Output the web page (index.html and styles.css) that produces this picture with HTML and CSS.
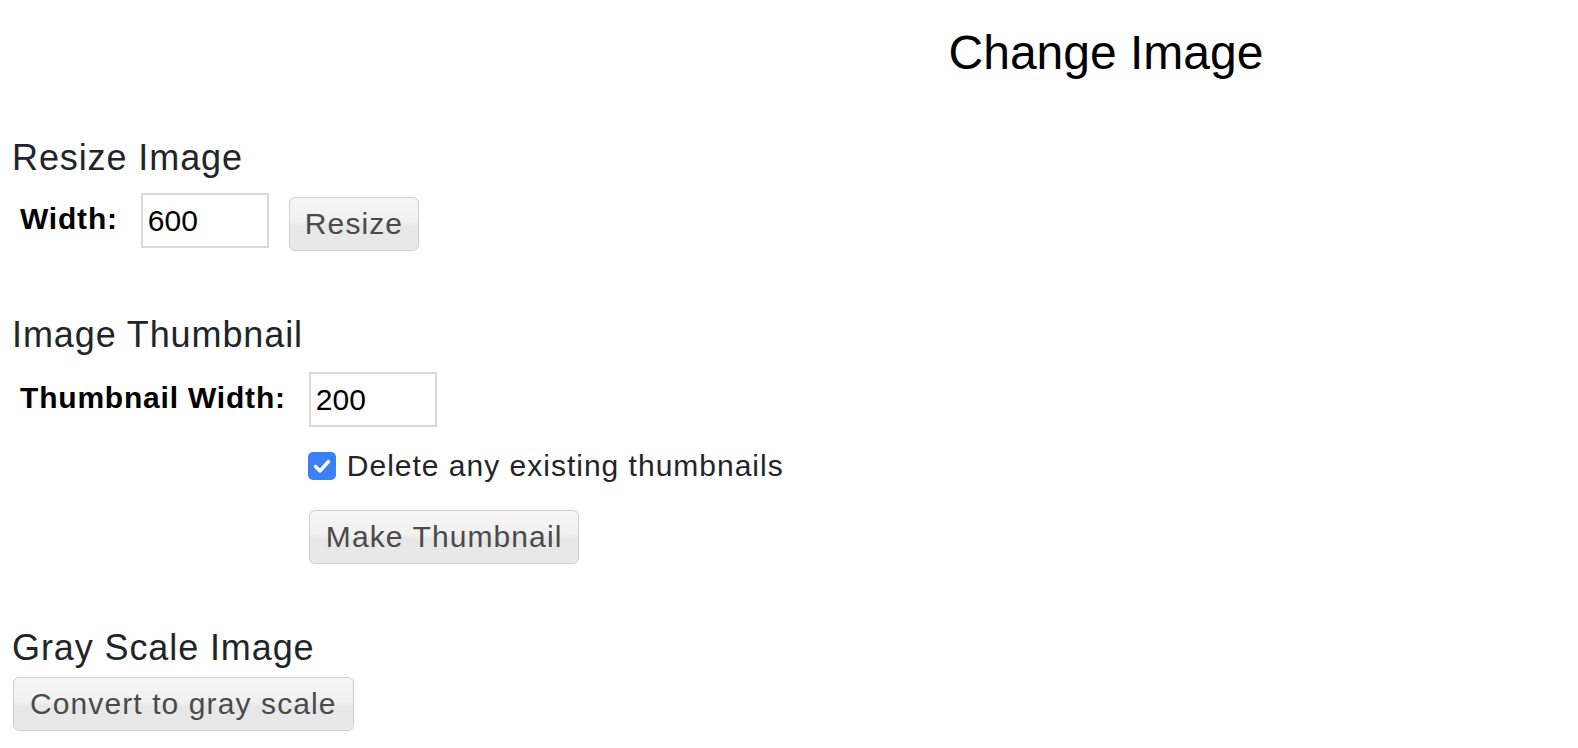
FILE: index.html
```html
<!DOCTYPE html>
<html lang="en">
<head>
<meta charset="utf-8">
<title>Change Image</title>
<link rel="stylesheet" href="styles.css">
</head>
<body>
<header class="top">
  <div class="top-spacer"></div>
  <h2 class="title">Change Image</h2>
</header>
<main class="page">
  <section class="tool tool-first">
    <h3 class="tool-title">Resize Image</h3>
    <form class="resize-row">
      <label class="field-label" for="resize-width">Width:</label>
      <input class="text-input" id="resize-width" type="text" value="600">
      <button class="btn btn-resize" type="button">Resize</button>
    </form>
  </section>
  <section class="tool">
    <h3 class="tool-title">Image Thumbnail</h3>
    <form class="thumb-grid">
      <label class="field-label" for="thumb-width">Thumbnail Width:</label>
      <input class="text-input" id="thumb-width" type="text" value="200">
      <label class="check-row">
        <span class="check-box"><svg width="28" height="28" viewBox="0 0 28 28"><path d="M7.5 14.5l4.5 4.5 8.5-9.5" fill="none" stroke="#fff" stroke-width="3.4" stroke-linecap="round" stroke-linejoin="round"/></svg></span>
        <span class="check-text">Delete any existing thumbnails</span>
      </label>
      <button class="btn btn-thumb" type="button">Make Thumbnail</button>
    </form>
  </section>
  <section class="tool tool-last">
    <h3 class="tool-title">Gray Scale Image</h3>
    <button class="btn btn-gray" type="button">Convert to gray scale</button>
  </section>
</main>
</body>
</html>
```
FILE: styles.css
```css
html, body {
  margin: 0;
  padding: 0;
  background: #fff;
}

body {
  font-family: "Liberation Sans", Arial, Helvetica, sans-serif;
  color: #212529;
}

.top {
  display: grid;
  grid-template-columns: 634px 1fr;
}

.title {
  margin: 0;
  padding-top: 25px;
  font-size: 48px;
  line-height: 56px;
  font-weight: 400;
  color: #000;
  text-align: center;
}

.page {
  padding-left: 12px;
}

.tool {
  margin-top: 64px;
}

.tool-first {
  margin-top: 57px;
}

.tool-title {
  margin: 0;
  font-size: 36px;
  line-height: 40px;
  font-weight: 400;
  letter-spacing: 0.9px;
  color: #212529;
}

.field-label {
  font-size: 30px;
  line-height: 34px;
  font-weight: 700;
  color: #000;
  letter-spacing: 0.8px;
  margin-left: 8px;
  margin-top: 9px;
}

.text-input {
  box-sizing: border-box;
  width: 128px;
  height: 55px;
  border: 2px solid #dadada;
  border-radius: 0;
  padding: 0 5px;
  font-family: "Liberation Sans", Arial, Helvetica, sans-serif;
  font-size: 30px;
  color: #000;
  background: #fff;
  outline: none;
}

.resize-row {
  margin: 15px 0 0;
  display: flex;
  align-items: flex-start;
  gap: 23px;
}

.btn {
  box-sizing: border-box;
  height: 54px;
  padding: 0 16px;
  border: 1.5px solid #cfcfcf;
  border-radius: 6px;
  background: linear-gradient(#f6f6f6, #f1f1f1 45%, #e7e7e7 55%, #e9e9e9);
  font-family: "Liberation Sans", Arial, Helvetica, sans-serif;
  font-size: 30px;
  letter-spacing: 1.1px;
  color: #4a4a4a;
  cursor: pointer;
}

.btn-resize {
  margin-left: -3px;
  margin-top: 4px;
  padding: 0 15px;
}

.thumb-grid {
  margin: 17px 0 0;
  display: grid;
  grid-template-columns: auto auto;
  justify-content: start;
  column-gap: 23px;
  align-items: start;
}

.check-row {
  grid-column: 2;
  margin-top: 22px;
  margin-left: -1px;
  display: flex;
  align-items: center;
  gap: 11px;
  font-size: 30px;
  line-height: 34px;
  letter-spacing: 1px;
  color: #212529;
}

.check-box {
  width: 28px;
  height: 28px;
  border-radius: 5px;
  background: #3a80f6;
  display: flex;
}

.btn-thumb {
  grid-column: 2;
  justify-self: start;
  margin-top: 27px;
}

.tool-last .tool-title {
  margin-bottom: 9px;
}

.btn-gray {
  margin-left: 1px;
}
```
